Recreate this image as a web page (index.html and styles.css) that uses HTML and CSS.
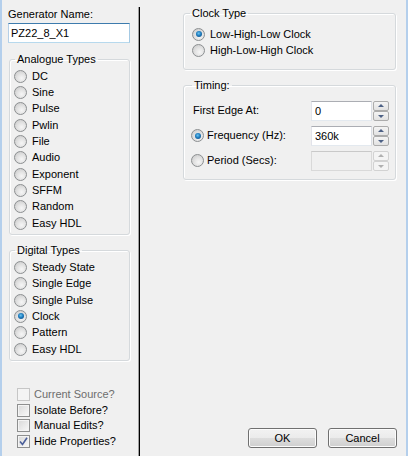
FILE: index.html
```html
<!DOCTYPE html>
<html>
<head>
<meta charset="utf-8">
<link rel="stylesheet" href="styles.css">
</head>
<body>
<div class="window">
  <div class="left">
    <div class="lbl">Generator Name:</div>
    <input class="name" type="text" value="PZ22_8_X1">
    <fieldset class="group analogue">
      <legend>Analogue Types</legend>
      <div class="opt"><span class="radio"></span>DC</div>
      <div class="opt"><span class="radio"></span>Sine</div>
      <div class="opt"><span class="radio"></span>Pulse</div>
      <div class="opt"><span class="radio"></span>Pwlin</div>
      <div class="opt"><span class="radio"></span>File</div>
      <div class="opt"><span class="radio"></span>Audio</div>
      <div class="opt"><span class="radio"></span>Exponent</div>
      <div class="opt"><span class="radio"></span>SFFM</div>
      <div class="opt"><span class="radio"></span>Random</div>
      <div class="opt"><span class="radio"></span>Easy HDL</div>
    </fieldset>
    <fieldset class="group digital">
      <legend>Digital Types</legend>
      <div class="opt"><span class="radio"></span>Steady State</div>
      <div class="opt"><span class="radio"></span>Single Edge</div>
      <div class="opt"><span class="radio"></span>Single Pulse</div>
      <div class="opt"><span class="radio on"></span>Clock</div>
      <div class="opt"><span class="radio"></span>Pattern</div>
      <div class="opt"><span class="radio"></span>Easy HDL</div>
    </fieldset>
    <div class="checks">
      <div class="chk disabled"><span class="box"></span>Current Source?</div>
      <div class="chk"><span class="box"></span>Isolate Before?</div>
      <div class="chk"><span class="box"></span>Manual Edits?</div>
      <div class="chk"><span class="box on"><svg width="9" height="9" viewBox="0 0 9 9"><path d="M1 4.5 L3.5 7.5 L8 0.8" fill="none" stroke="#4b5f9a" stroke-width="1.6"/></svg></span>Hide Properties?</div>
    </div>
  </div>
  <div class="divider"></div>
  <div class="right">
    <fieldset class="group clock">
      <legend>Clock Type</legend>
      <div class="opt"><span class="radio on"></span>Low-High-Low Clock</div>
      <div class="opt"><span class="radio"></span>High-Low-High Clock</div>
    </fieldset>
    <fieldset class="group timing">
      <legend>Timing:</legend>
      <div class="trow">
        <span class="tlabel plain">First Edge At:</span>
        <div class="spin">
          <input class="num" type="text" value="0">
          <div class="spinbtns"><span class="sb up"></span><span class="sb down"></span></div>
        </div>
      </div>
      <div class="trow">
        <span class="tlabel"><span class="radio on"></span>Frequency (Hz):</span>
        <div class="spin">
          <input class="num" type="text" value="360k">
          <div class="spinbtns"><span class="sb up"></span><span class="sb down"></span></div>
        </div>
      </div>
      <div class="trow">
        <span class="tlabel"><span class="radio"></span>Period (Secs):</span>
        <div class="spin off">
          <input class="num" type="text" value="" disabled>
          <div class="spinbtns"><span class="sb up"></span><span class="sb down"></span></div>
        </div>
      </div>
    </fieldset>
    <div class="buttons">
      <button class="btn">OK</button>
      <button class="btn">Cancel</button>
    </div>
  </div>
</div>
</body>
</html>
```

FILE: styles.css
```css
html, body {
  margin: 0;
  padding: 0;
  background: #f0f0f0;
}
body {
  font-family: "Liberation Sans", Arial, sans-serif;
  font-size: 11px;
  line-height: 13px;
  color: #000;
}
.window {
  display: flex;
  height: 456px;
  box-sizing: border-box;
  border-left: 2px solid #b4cfec;
  border-right: 2px solid #b4cfec;
  background: #f0f0f0;
}
.left {
  width: 136px;
  box-sizing: border-box;
  padding: 8px 0 0 6px;
  display: flex;
  flex-direction: column;
}
.lbl {
  height: 13px;
}
.name {
  margin: 2px 0 0 0;
  width: 122px;
  height: 20px;
  box-sizing: border-box;
  border: 1px solid;
  border-color: #3d7bad #a4c9e3 #b7d9ed #b5cfe7;
  padding: 0 2px;
  font: 11px "Liberation Sans", Arial, sans-serif;
  color: #000;
  background: #fff;
  outline: none;
}
.group {
  margin: 0;
  border: 1px solid #d5d9dc;
  border-radius: 3px;
  box-shadow: inset 1px 1px 0 #fff, 1px 1px 0 #fff;
  padding: 2px 4px 4px 4px;
  box-sizing: border-box;
  min-width: 0;
}
.group legend {
  padding: 0 2px;
  margin-left: 1px;
  line-height: 13px;
}
.analogue {
  width: 121px;
  margin: 10px 0 0 1px;
  padding-bottom: 3px;
}
.digital {
  width: 121px;
  margin: 9px 0 0 1px;
  padding-bottom: 3px;
}
.opt {
  height: 16.33px;
  display: flex;
  align-items: center;
  white-space: nowrap;
}
.radio {
  width: 13px;
  height: 13px;
  box-sizing: border-box;
  border-radius: 50%;
  border: 1px solid #8c8f91;
  background: radial-gradient(circle at 60% 65%, #f6f6f6 0%, #e2e2e2 45%, #c4c4c4 100%);
  margin-right: 5px;
  flex: none;
  position: relative;
}
.radio.on::after {
  content: "";
  position: absolute;
  left: 2.5px;
  top: 2.5px;
  width: 6px;
  height: 6px;
  border-radius: 50%;
  background: radial-gradient(circle at 45% 40%, #6cc4f0 0%, #1f7dbf 45%, #0e3f72 100%);
}
.checks {
  margin-top: 25px;
}
.chk {
  height: 15.9px;
  display: flex;
  align-items: center;
  padding-left: 9px;
  white-space: nowrap;
}
.chk .box {
  width: 13px;
  height: 13px;
  box-sizing: border-box;
  border: 1px solid #8e8f8f;
  background: linear-gradient(135deg, #d8d8d8 0%, #ececec 60%, #f8f8f8 100%);
  box-shadow: inset 0 0 0 1px #f4f4f4;
  margin-right: 4px;
  display: flex;
  align-items: center;
  justify-content: center;
  flex: none;
}
.chk.disabled {
  color: #6d6d6d;
}
.chk.disabled .box {
  border-color: #c6c6c6;
  background: #f4f4f4;
  box-shadow: none;
}
.divider {
  width: 1px;
  margin-top: 7px;
  border-left: 1px solid #a0a0a0;
  background: #000;
}
.right {
  flex: 1;
  box-sizing: border-box;
  padding: 7px 9px 8px 43px;
  display: flex;
  flex-direction: column;
}
.clock {
  width: 213px;
  padding: 6px 8px 10px 8px;
}
.clock legend {
  margin-left: -2px;
}
.timing {
  width: 213px;
  margin-top: 9px;
  padding: 9px 6px 8px 7px;
}
.timing legend {
  margin-left: 1px;
}
.trow {
  display: flex;
  align-items: center;
  justify-content: space-between;
  height: 20px;
  margin-bottom: 5px;
}
.trow:last-child {
  margin-bottom: 0;
}
.tlabel {
  display: flex;
  align-items: center;
  white-space: nowrap;
}
.tlabel.plain {
  padding-left: 2px;
}
.tlabel .radio {
  margin-right: 3px;
}
.spin {
  display: flex;
  height: 20px;
}
.num {
  width: 61px;
  height: 20px;
  box-sizing: border-box;
  margin: 0;
  border: 1px solid;
  border-color: #abadb3 #dbdfe6 #e3e9ef #e2e3ea;
  padding: 0 3px;
  font: 11px "Liberation Sans", Arial, sans-serif;
  color: #000;
  background: #fff;
  outline: none;
}
.spin.off .num {
  background: #f0f0f0;
  border-color: #c9c9c9 #d9d9d9 #d9d9d9 #d9d9d9;
}
.spinbtns {
  width: 16px;
  margin-left: 1px;
  display: flex;
  flex-direction: column;
}
.sb {
  flex: 1;
  box-sizing: border-box;
  border: 1px solid #acacac;
  border-radius: 2px;
  background: linear-gradient(#f4f4f4, #e2e2e2);
  position: relative;
}
.sb::after {
  content: "";
  position: absolute;
  left: 4px;
  width: 0;
  height: 0;
  border-left: 3px solid transparent;
  border-right: 3px solid transparent;
}
.sb.up::after {
  top: 2px;
  border-bottom: 3px solid #4d6185;
}
.sb.down::after {
  top: 3px;
  border-top: 3px solid #4d6185;
}
.spin.off .sb {
  border-color: #d2d2d2;
  background: #f4f4f4;
}
.spin.off .sb::after {
  border-bottom-color: #b0b0b0;
  border-top-color: #b0b0b0;
}
.buttons {
  margin-top: auto;
  display: flex;
  justify-content: flex-end;
  gap: 11px;
}
.btn {
  width: 69px;
  height: 20px;
  box-sizing: border-box;
  border: 1px solid #707070;
  border-radius: 3px;
  background: linear-gradient(#f2f2f2 0%, #ebebeb 50%, #dddddd 51%, #cfcfcf 100%);
  font: 11px "Liberation Sans", Arial, sans-serif;
  color: #000;
  padding: 0;
  box-shadow: inset 0 0 0 1px #fcfcfc;
}
```
